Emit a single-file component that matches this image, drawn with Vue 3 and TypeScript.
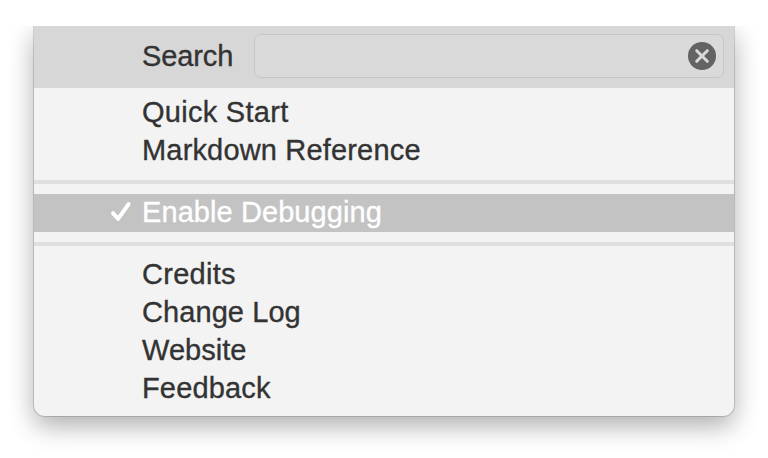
<script setup lang="ts">
interface MenuItem {
  label: string
  tracking: number
  checked?: boolean
}

const groups: MenuItem[][] = [
  [
    { label: 'Quick Start', tracking: 0.28 },
    { label: 'Markdown Reference', tracking: 0.17 },
  ],
  [{ label: 'Enable Debugging', tracking: 0.08, checked: true }],
  [
    { label: 'Credits', tracking: 0.28 },
    { label: 'Change Log', tracking: 0.08 },
    { label: 'Website', tracking: 0.04 },
    { label: 'Feedback', tracking: 0.16 },
  ],
]
</script>

<template>
  <main class="stage">
    <div class="clip">
      <nav class="menu">
        <div class="search">
          <span class="search-label text">Search</span>
          <div class="field">
            <svg class="clear" viewBox="0 0 28 28">
              <circle cx="14" cy="14" r="14" fill="#636363" />
              <path d="M8.7 8.7 19.3 19.3M19.3 8.7 8.7 19.3" stroke="#dadada" stroke-width="3" stroke-linecap="round" />
            </svg>
          </div>
        </div>
        <ul v-for="(group, g) in groups" :key="g" class="group">
          <li v-for="item in group" :key="item.label" class="item" :class="{ active: item.checked }">
            <span class="mark">
              <svg v-if="item.checked" class="check" viewBox="0 0 22 22">
                <path d="M3 12.2 8.1 17.8 18.6 3.2" fill="none" stroke="#fff" stroke-width="4" stroke-linecap="round" stroke-linejoin="round" />
              </svg>
            </span>
            <span class="text" :style="{ letterSpacing: item.tracking + 'px' }">{{ item.label }}</span>
          </li>
        </ul>
      </nav>
    </div>
  </main>
</template>

<style>
body {
  margin: 0;
  background: #fff;
}
</style>

<style scoped>
.stage {
  box-sizing: border-box;
  width: 768px;
  height: 458px;
  padding-top: 26px;
  overflow: hidden;
  background: #fff;
  font-family: "Liberation Sans", Arial, sans-serif;
  font-size: 29px;
  color: #333;
}
.clip {
  box-sizing: border-box;
  height: 432px;
  padding: 0 34px;
  overflow: hidden;
}
.menu {
  box-sizing: border-box;
  width: 700px;
  height: 390px;
  background: #f3f3f3;
  border-radius: 0 0 11px 11px;
  box-shadow: 0 0 0 1px rgba(0, 0, 0, 0.14), 0 10px 26px rgba(0, 0, 0, 0.32);
}
.search {
  box-sizing: border-box;
  display: flex;
  height: 62px;
  padding: 8px 10px 10px 108px;
  background: #d7d7d7;
}
.search-label {
  width: 112px;
  line-height: 44px;
  letter-spacing: -0.1px;
}
.field {
  box-sizing: border-box;
  flex: 1;
  display: flex;
  align-items: center;
  justify-content: flex-end;
  height: 44px;
  padding-right: 7px;
  border: 1px solid #c6c6c6;
  border-radius: 7px;
  background: #dadada;
}
.clear {
  width: 28px;
  height: 28px;
}
.group {
  margin: 0;
  padding: 6px 0 10px;
  list-style: none;
}
.group + .group {
  border-top: 4px solid #dfdfdf;
  padding-top: 10px;
}
.item {
  display: flex;
  height: 38px;
  line-height: 36px;
}
.mark {
  display: flex;
  align-items: center;
  justify-content: flex-end;
  box-sizing: border-box;
  width: 108px;
  padding: 0 10px 2px 0;
}
.check {
  width: 22px;
  height: 22px;
}
.active {
  background: #c3c3c3;
  color: #fff;
}
.text {
  white-space: nowrap;
  -webkit-text-stroke: 0.35px currentColor;
}
</style>
